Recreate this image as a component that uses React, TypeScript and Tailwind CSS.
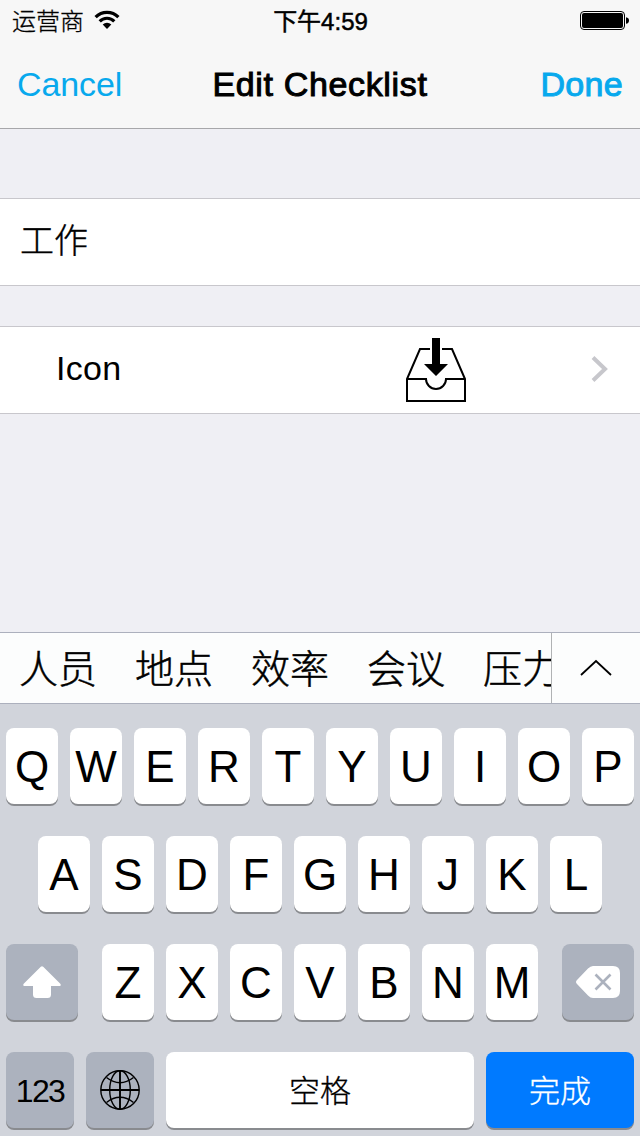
import type { ReactNode } from "react";

const candidates = ["人员", "地点", "效率", "会议", "压力"];

const keyBase =
  "flex h-[76px] shrink-0 items-center justify-center rounded-[8px] shadow-[0_2px_0_#898b8f]";

function Letter({ children }: { children: string }) {
  return (
    <button className={`${keyBase} w-[52px] bg-white pt-[2px] text-[44px] leading-none`}>
      {children}
    </button>
  );
}

function SpecialKey({ label, width, children }: { label: string; width: string; children: ReactNode }) {
  return (
    <button aria-label={label} className={`${keyBase} ${width} bg-[#acb2be]`}>
      {children}
    </button>
  );
}

function StatusBar() {
  return (
    <div className="grid h-10 grid-cols-3 items-center pl-3 pr-[11px] text-[24px] leading-10">
      <div className="flex items-center gap-[10px]">
        <span className="pt-[2px] font-light [-webkit-text-stroke:0.3px_#000]">运营商</span>
        <svg width="26" height="20" viewBox="0 0 26 20" className="-mt-[3px]">
          <g fill="none" stroke="#000" strokeWidth="3.2">
            <path d="M1.6 7.1A16 16 0 0 1 24.4 7.1" />
            <path d="M5.7 11.3A10.3 10.3 0 0 1 20.3 11.3" />
          </g>
          <path d="M8.7 14.6A6.2 6.2 0 0 1 17.3 14.6L13 19Z" />
        </svg>
      </div>
      <span className="pt-[2px] text-center [-webkit-text-stroke:0.5px_#000]">下午4:59</span>
      <svg width="50" height="20" viewBox="0 0 50 20" className="-mt-[2px] justify-self-end">
        <rect x="1.5" y="1.5" width="44" height="18" rx="3.5" fill="none" stroke="#000" />
        <rect x="3" y="3" width="41" height="15" rx="2" />
        <path d="M47 7.2q3 .5 3 3.3t-3 3.3z" />
      </svg>
    </div>
  );
}

function InboxIcon() {
  return (
    <svg width="60" height="66" viewBox="0 0 60 66" className="mt-[2px]">
      <g fill="none" stroke="#000" strokeWidth="2">
        <path d="M24 11H14L1 41V63H59V41L46 11H36" />
        <path d="M1 41H20A10 10 0 0 0 40 41H59" />
      </g>
      <path d="M26 0H34V26H42L30 38L18 26H26Z" />
    </svg>
  );
}

export default function App() {
  return (
    <div className="flex h-[1136px] w-[640px] flex-col overflow-hidden bg-[#efeff4] font-['Liberation_Sans','Noto_Sans_CJK_SC',sans-serif] text-black">
      <header className="h-[129px] shrink-0 border-b border-[#a7a7aa] bg-[#f7f7f7]">
        <StatusBar />
        <div className="flex h-[88px] items-center justify-between px-[17px] text-[34px]">
          <button className="w-[110px] text-left tracking-[-0.1px] text-[#08a9ed]">Cancel</button>
          <h1 className="tracking-[0.65px] [-webkit-text-stroke:1px_#000]">Edit Checklist</h1>
          <button className="w-[110px] text-right tracking-[0.3px] text-[#08a9ed] [-webkit-text-stroke:1px_#08a9ed]">
            Done
          </button>
        </div>
      </header>

      <main className="flex flex-1 flex-col gap-10 pt-[69px]">
        <div className="flex h-[88px] items-center border-y border-[#c8c7cc] bg-white pb-px pl-5 text-[34px] font-light [-webkit-text-stroke:0.4px_#000]">
          工作
        </div>
        <div className="flex h-[88px] items-center border-y border-[#c8c7cc] bg-white pl-14 pr-[31px] text-[34px]">
          <span className="w-[350px] pb-[3px] tracking-[0.3px]">Icon</span>
          <InboxIcon />
          <svg width="18" height="28" viewBox="0 0 18 28" className="mb-[3px] ml-auto">
            <path d="M2 2.5L14 14L2 25.5" fill="none" stroke="#c7c7cc" strokeWidth="4" />
          </svg>
        </div>
      </main>

      <section className="h-[504px] shrink-0 bg-[#d1d4db]">
        <div className="flex h-[72px] border-y border-[#acb0bd] bg-[#fcfdfd]">
          <div className="flex w-[551px] items-center gap-[38px] overflow-hidden whitespace-nowrap pl-[19px] pt-[4px] text-[39px] font-light [-webkit-text-stroke:0.5px_#000]">
            {candidates.map((word) => (
              <span key={word} className="shrink-0">
                {word}
              </span>
            ))}
          </div>
          <button aria-label="展开" className="flex flex-1 items-center justify-center border-l border-[#b0b2b4]">
            <svg width="34" height="18" viewBox="0 0 34 18">
              <path d="M2 16L17 2L32 16" fill="none" stroke="#000" strokeWidth="1.8" />
            </svg>
          </button>
        </div>

        <div className="flex flex-col gap-8 px-[6px] pt-6">
          <div className="flex gap-3">
            {"QWERTYUIOP".split("").map((c) => (
              <Letter key={c}>{c}</Letter>
            ))}
          </div>
          <div className="flex justify-center gap-3">
            {"ASDFGHJKL".split("").map((c) => (
              <Letter key={c}>{c}</Letter>
            ))}
          </div>
          <div className="flex justify-between">
            <SpecialKey label="Shift" width="w-[72px]">
              <svg width="38" height="32" viewBox="0 0 38 32">
                <path
                  d="M17.8.7Q19-.4 20.2.7L37.3 17.8Q38.6 19.6 36.5 20H28V28.5Q28 32 24.5 32H13.5Q10 32 10 28.5V20H1.5Q-.6 19.6.7 17.8Z"
                  fill="#fff"
                />
              </svg>
            </SpecialKey>
            <div className="flex gap-3">
              {"ZXCVBNM".split("").map((c) => (
                <Letter key={c}>{c}</Letter>
              ))}
            </div>
            <SpecialKey label="Delete" width="w-[72px]">
              <svg width="44" height="32" viewBox="0 0 44 32">
                <path
                  d="M17 0H37Q44 0 44 7V25Q44 32 37 32H17Q14.5 32 12 29.5L1 18Q-1 16 1 14L12 2.5Q14.5 0 17 0Z"
                  fill="#fff"
                />
                <path d="M19.5 8.5L34.5 23.5M34.5 8.5L19.5 23.5" stroke="#acb2be" strokeWidth="2.6" />
              </svg>
            </SpecialKey>
          </div>
          <div className="flex gap-3">
            <SpecialKey label="123" width="w-[68px]">
              <span className="pt-px text-[32px] tracking-[-1.6px]">123</span>
            </SpecialKey>
            <SpecialKey label="Globe" width="w-[68px]">
              <svg width="40" height="40" viewBox="0 0 40 40" fill="none" stroke="#000" strokeWidth="1.4">
                <circle cx="20" cy="20" r="19.2" />
                <ellipse cx="20" cy="20" rx="10.3" ry="19.2" />
                <path d="M20 1V39M1 20H39" strokeWidth="1.9" />
                <path d="M6.5 7.5Q20 18 33.5 7.5M6.5 32.5Q20 22 33.5 32.5" />
              </svg>
            </SpecialKey>
            <button
              className={`${keyBase} w-[308px] bg-white pt-[5px] text-[31px] font-light [-webkit-text-stroke:0.3px_#000]`}
            >
              空格
            </button>
            <button
              className={`${keyBase} w-[148px] bg-[#007aff] pt-[5px] text-[31px] font-light text-white [-webkit-text-stroke:0.3px_#fff]`}
            >
              完成
            </button>
          </div>
        </div>
      </section>
    </div>
  );
}
